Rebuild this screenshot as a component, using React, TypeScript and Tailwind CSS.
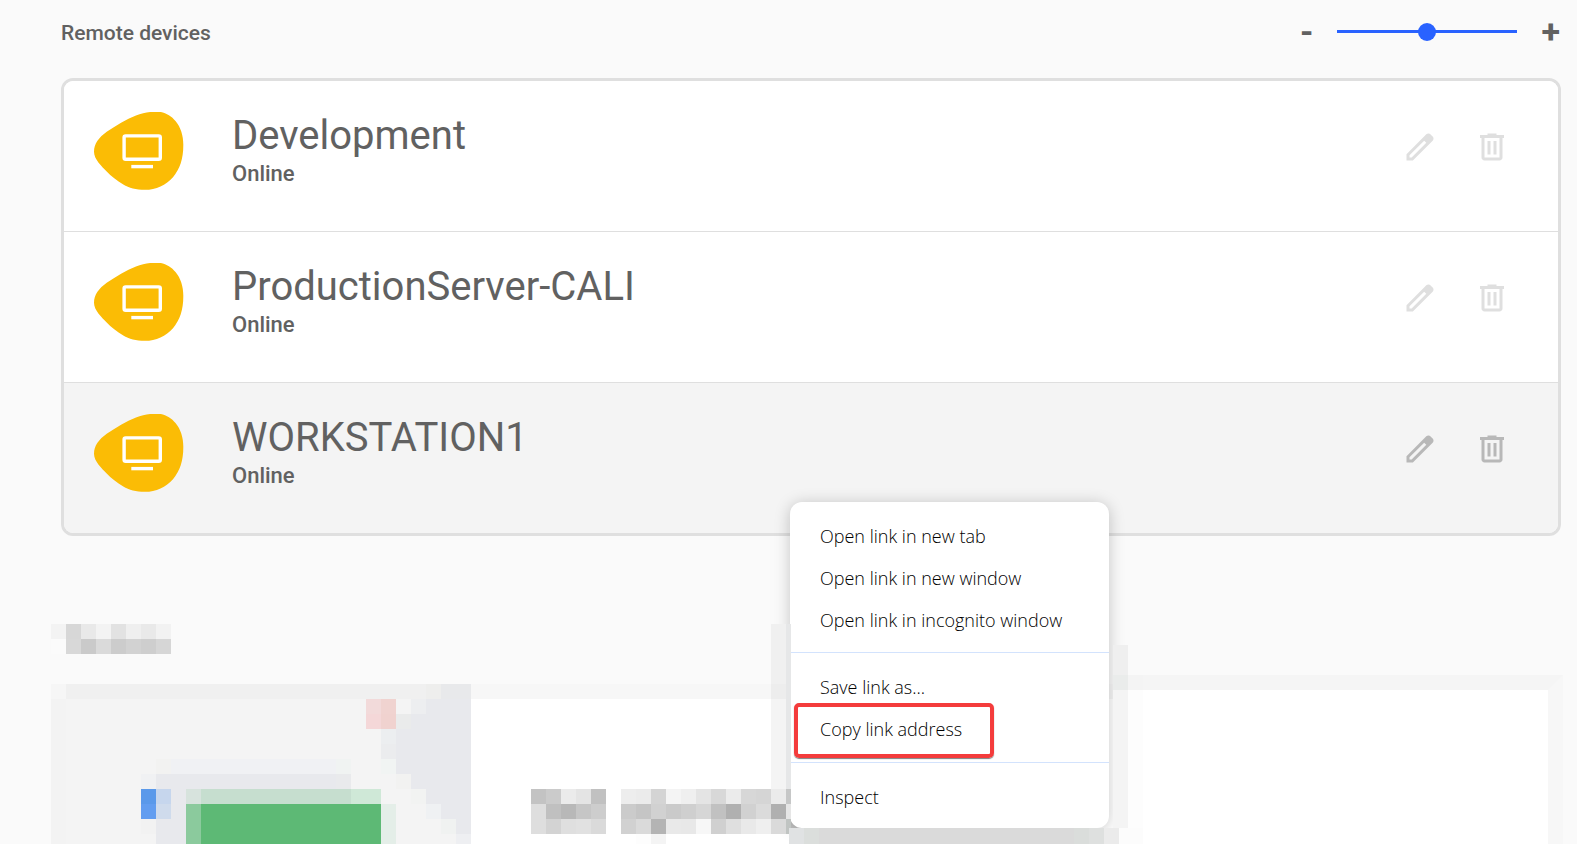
import React, { useState } from "react";

type Run = [x: number, y: number, w: number, h: number, fill: string];

const CELL = 15;

/** Pixelated block drawing: every run is measured in 15px cells. */
function Mosaic({ cols, rows, runs, className = "" }: { cols: number; rows: number; runs: Run[]; className?: string }) {
  return (
    <svg
      width={cols * CELL}
      height={rows * CELL}
      viewBox={`0 0 ${cols} ${rows}`}
      shapeRendering="crispEdges"
      aria-hidden="true"
      className={`block shrink-0 ${className}`}
    >
      {runs.map(([x, y, w, h, fill], i) => (
        <rect key={i} x={x} y={y} width={w} height={h} fill={fill} />
      ))}
    </svg>
  );
}

function fromGreys(lines: string[]): Run[] {
  return lines.flatMap((line, y) =>
    line
      .split(" ")
      .map((v, x): Run => [x, y, 1, 1, v === "--" ? "none" : `#${v}${v}${v}`])
  );
}

const headingRuns = fromGreys(["f3 d7 e9 f3 e2 ef e9 f2", "fb d8 ca da cc d2 ce d6"]);

const captionRuns = fromGreys([
  "c3 cb eb e4 c1 -- ed eb d4 f4 ef e4 d8 eb d7 d5 eb c9",
  "de c0 b8 c6 cd -- cb c5 d1 ca cf d6 c1 b0 d1 db b0 e6",
  "de d3 df e1 da -- d1 da b4 e9 e8 f7 d0 df e9 ef da c2",
  "-- -- -- -- -- -- -- fd f4 -- -- -- -- -- -- -- -- --",
]);

const SLATE = "#e8e9ed";
const GREEN = "#5db975";

const artRuns: Run[] = [
  [0, 0, 28, 11, "#f4f4f4"],
  [0, 1, 1, 10, "#f3f3f3"],
  [0, 0, 1, 1, "#f6f6f6"],
  [1, 0, 24, 1, "#f0f0f0"],
  [25, 0, 1, 1, "#eeeeed"],
  [26, 0, 2, 1, "#e8e9eb"],
  [21, 1, 1, 1, "#f2dada"],
  [22, 1, 1, 1, "#f0d3d0"],
  [24, 1, 1, 1, "#edeef0"],
  [25, 1, 3, 1, SLATE],
  [21, 2, 1, 1, "#f4d7d8"],
  [22, 2, 1, 1, "#f0d2cf"],
  [23, 2, 1, 1, "#eaebeb"],
  [24, 2, 4, 1, SLATE],
  [22, 3, 1, 1, "#eceef0"],
  [22, 4, 1, 1, "#ebecee"],
  [22, 5, 1, 1, "#f1f4f3"],
  [23, 3, 5, 3, SLATE],
  [7, 5, 1, 1, "#f2f2f1"],
  [8, 5, 11, 1, "#f0f1f4"],
  [19, 5, 1, 1, "#f0f3f2"],
  [6, 6, 1, 1, "#f0f1f3"],
  [7, 6, 12, 1, SLATE],
  [19, 6, 1, 1, "#e9eaec"],
  [23, 6, 1, 1, "#f2f2f1"],
  [24, 6, 4, 1, SLATE],
  [6, 7, 1, 1, "#5a99ea"],
  [7, 7, 1, 1, "#c6d6ed"],
  [8, 7, 1, 4, SLATE],
  [9, 7, 1, 1, "#d7e3dd"],
  [10, 7, 10, 1, "#c6decf"],
  [20, 7, 2, 1, "#cfe8d7"],
  [24, 7, 1, 1, "#f2f3f2"],
  [25, 7, 3, 1, SLATE],
  [6, 8, 1, 1, "#629df0"],
  [7, 8, 1, 1, "#cfdbec"],
  [25, 8, 1, 1, "#eff1f3"],
  [26, 8, 2, 1, SLATE],
  [6, 9, 1, 1, "#f2f2f2"],
  [7, 9, 1, 2, SLATE],
  [9, 8, 1, 3, "#8bca9d"],
  [10, 8, 12, 3, GREEN],
  [22, 8, 1, 3, "#e4eee8"],
  [26, 9, 1, 1, "#f0f2f1"],
  [27, 9, 1, 1, SLATE],
  [27, 10, 1, 1, "#eeeff2"],
];

function DeviceBadge() {
  return (
    <svg width="90" height="79" viewBox="0 0 90 79" aria-hidden="true" className="shrink-0">
      <path
        fill="#fbbc05"
        d="M0 39.8C0 31.5 5 25.5 12.7 19.8C22 13.5 32 7.5 42 3.5C49 .9 56 -.4 62.7 -.4C70 -.4 77 3.5 81.5 9C87 15.5 89.5 24.5 89.3 33.5C89.3 46.5 86 57 79 65.2C72 73.2 62 77.8 51 77.8C42 77.8 35 75.8 29.3 72.4C23 69 17 64 12.7 59.6C8 54.5 0 47.5 0 39.8Z"
      />
      <rect x="30.1" y="23.9" width="36.2" height="23.4" rx="1.6" fill="none" stroke="#fff" strokeWidth="3.4" />
      <rect x="37.3" y="52.9" width="21.7" height="3.4" fill="#fff" />
    </svg>
  );
}

function EditIcon() {
  return (
    <svg width="36" height="36" viewBox="0 -960 960 960" fill="currentColor" aria-hidden="true">
      <path d="M200-200h57l391-391-57-57-391 391v57Zm-80 80v-170l528-527q12-11 26.5-17t30.5-6q16 0 31 6t26 18l55 56q12 11 17.5 26t5.5 30q0 16-5.5 30.5T817-647L290-120H120Z" />
    </svg>
  );
}

function DeleteIcon() {
  return (
    <svg width="36" height="36" viewBox="0 -960 960 960" fill="currentColor" aria-hidden="true">
      <path d="M280-120q-33 0-56.5-23.5T200-200v-520h-40v-80h200v-40h240v40h200v80h-40v520q0 33-23.5 56.5T680-120H280Zm400-600H280v520h400v-520ZM360-280h80v-360h-80v360Zm160 0h80v-360h-80v360Z" />
    </svg>
  );
}

const devices = [
  { name: "Development", status: "Online", active: false },
  { name: "ProductionServer-CALI", status: "Online", active: false },
  { name: "WORKSTATION1", status: "Online", active: true },
];

function DeviceRow({ name, status, active }: (typeof devices)[number]) {
  return (
    <li className={`flex items-start pt-[31px] pr-12 pl-[30px] ${active ? "h-[150px] bg-[#f4f4f4]" : "h-[151px] border-b border-[#dfdfdf] bg-white"}`}>
      <a href="#session" className="flex min-w-0 flex-1 items-start gap-12">
        <DeviceBadge />
        <span className="flex min-w-0 flex-col">
          <span className="truncate text-[40px] leading-[48px]">{name}</span>
          <span className="text-[22px] leading-7 font-medium">{status}</span>
        </span>
      </a>
      <div className={`flex gap-9 pt-[17px] ${active ? "text-[#b8b8b8]" : "text-[#dfdfdf]"}`}>
        <button type="button" aria-label={`Edit ${name}`}>
          <EditIcon />
        </button>
        <button type="button" aria-label={`Delete ${name}`}>
          <DeleteIcon />
        </button>
      </div>
    </li>
  );
}

function MenuItem({ children }: { children: React.ReactNode }) {
  return (
    <button type="button" role="menuitem" className="block h-[42px] w-full px-[30px] pb-[2px] text-left">
      {children}
    </button>
  );
}

function ContextMenu() {
  return (
    <div className="absolute top-[502px] left-[790px] w-[319px]">
      <div
        role="menu"
        className="rounded-xl bg-white pt-[14px] pb-[9px] font-['Open_Sans','Noto_Sans',sans-serif] text-[18px] font-light text-black shadow-[0_2px_16px_rgba(0,0,0,0.22)]"
      >
        <MenuItem>Open link in new tab</MenuItem>
        <MenuItem>Open link in new window</MenuItem>
        <MenuItem>Open link in incognito window</MenuItem>
        <hr className="mt-[10px] mb-[14px] border-[#d3e3fd]" />
        <MenuItem>Save link as...</MenuItem>
        <div className="relative">
          <MenuItem>Copy link address</MenuItem>
          <div className="pointer-events-none absolute -top-[6px] left-1 h-[55px] w-[200px] rounded-[5px] border-4 border-[#f43c3c] shadow-[0_1px_1px_rgba(0,0,0,0.5)]" />
        </div>
        <hr className="mt-[11px] mb-[14px] border-[#d3e3fd]" />
        <MenuItem>Inspect</MenuItem>
      </div>
      <svg
        width="372"
        height="220"
        viewBox="771 624 372 220"
        shapeRendering="crispEdges"
        aria-hidden="true"
        className="pointer-events-none absolute top-[122px] -left-[19px] max-w-none"
      >
        <path fill="#f0f0f0" d="M771 624h15v60h-15z" />
        <path fill="#ededed" d="M771 684h15v15h-15z" />
        <path fill="#f4f4f4" d="M771 699h15v90h-15z" />
        <path fill="#e6e7e8" d="M786 624h5v165h-5z" />
        <path fill="#ebebeb" d="M771 789h15v15h-15z" />
        <path fill="#b0b0b0" d="M771 804h15v15h-15z" />
        <path fill="#dadada" d="M771 819h15v15h-15z" />
        <path fill="#c6c7c7" d="M786 789h5v15h-5z" />
        <path fill="#e6e6e6" d="M786 804h5v15h-5z" />
        <path fill="#c0c4c2" d="M786 819h5v15h-5z" />
        <path fill="#efefef" d="M1113 645h15v30h-15z" />
        <path fill="#eaeceb" d="M1113 675h15v15h-15z" />
        <path fill="#f4f4f4" d="M1113 690h15v138h-15z" />
        <path fill="#fafafa" d="M1128 645h15v30h-15z" />
        <path fill="#f4f4f4" d="M1128 675h15v15h-15z" />
        <path fill="#fdfdfd" d="M1128 690h15v138h-15z" />
        <path fill="#e0e2e3" d="M789 828h15v16h-15z" />
        <path fill="#dbdedc" d="M804 828h15v16h-15z" />
        <path fill="#dadada" d="M819 828h255v16H819z" />
        <path fill="#dadddb" d="M1074 828h15v16h-15z" />
        <path fill="#dee0df" d="M1089 828h15v16h-15z" />
        <path fill="#ebebeb" d="M1104 828h15v16h-15z" />
        <path fill="#fcfcfc" d="M1119 828h24v16h-24z" />
      </svg>
    </div>
  );
}

export default function App() {
  const [zoom, setZoom] = useState(50);

  return (
    <div className="relative flex min-h-screen flex-col overflow-hidden bg-[#fafafa] font-[Roboto,sans-serif] text-[#616161]">
      <header className="flex h-[62px] items-center justify-between pr-[17px] pl-[61px]">
        <h1 className="pt-1 text-[21px] leading-7 font-medium">Remote devices</h1>
        <div className="flex items-center gap-6 text-[34px] leading-10 font-bold">
          <button type="button" aria-label="Smaller">-</button>
          <input
            type="range"
            aria-label="Row size"
            value={zoom}
            onChange={(e) => setZoom(Number(e.target.value))}
            className="h-[18px] w-[180px] appearance-none bg-transparent [&::-webkit-slider-runnable-track]:h-[3px] [&::-webkit-slider-runnable-track]:bg-[#2962ff] [&::-webkit-slider-thumb]:-mt-[7px] [&::-webkit-slider-thumb]:h-[18px] [&::-webkit-slider-thumb]:w-[18px] [&::-webkit-slider-thumb]:appearance-none [&::-webkit-slider-thumb]:rounded-full [&::-webkit-slider-thumb]:bg-[#2962ff]"
          />
          <button type="button" aria-label="Larger">+</button>
        </div>
      </header>

      <main className="flex flex-1 flex-col">
        <ul className="mt-4 mr-4 ml-[61px] overflow-hidden rounded-xl border-[3px] border-[#dfdfdf]">
          {devices.map((d) => (
            <DeviceRow key={d.name} {...d} />
          ))}
        </ul>

        <section className="flex flex-1 flex-col pt-[88px] pr-[14px] pl-[51px]">
          <Mosaic cols={8} rows={2} runs={headingRuns} />
          <div className="mt-[21px] flex flex-1 items-stretch">
            <div className="mt-[9px] h-[160px] w-[420px] shrink-0 overflow-hidden">
              <Mosaic cols={28} rows={11} runs={artRuns} />
            </div>
            <div className="mt-[9px] h-[160px] w-[642px] shrink-0 overflow-hidden border-t-[15px] border-[#f7f7f7] bg-white pt-[90px] pl-[60px]">
              <Mosaic cols={18} rows={4} runs={captionRuns} />
            </div>
            <div className="flex-1 border-t-[15px] border-r-[15px] border-[#f5f5f5] border-r-[#f7f7f7] bg-white" />
          </div>
        </section>
      </main>

      <ContextMenu />
    </div>
  );
}
